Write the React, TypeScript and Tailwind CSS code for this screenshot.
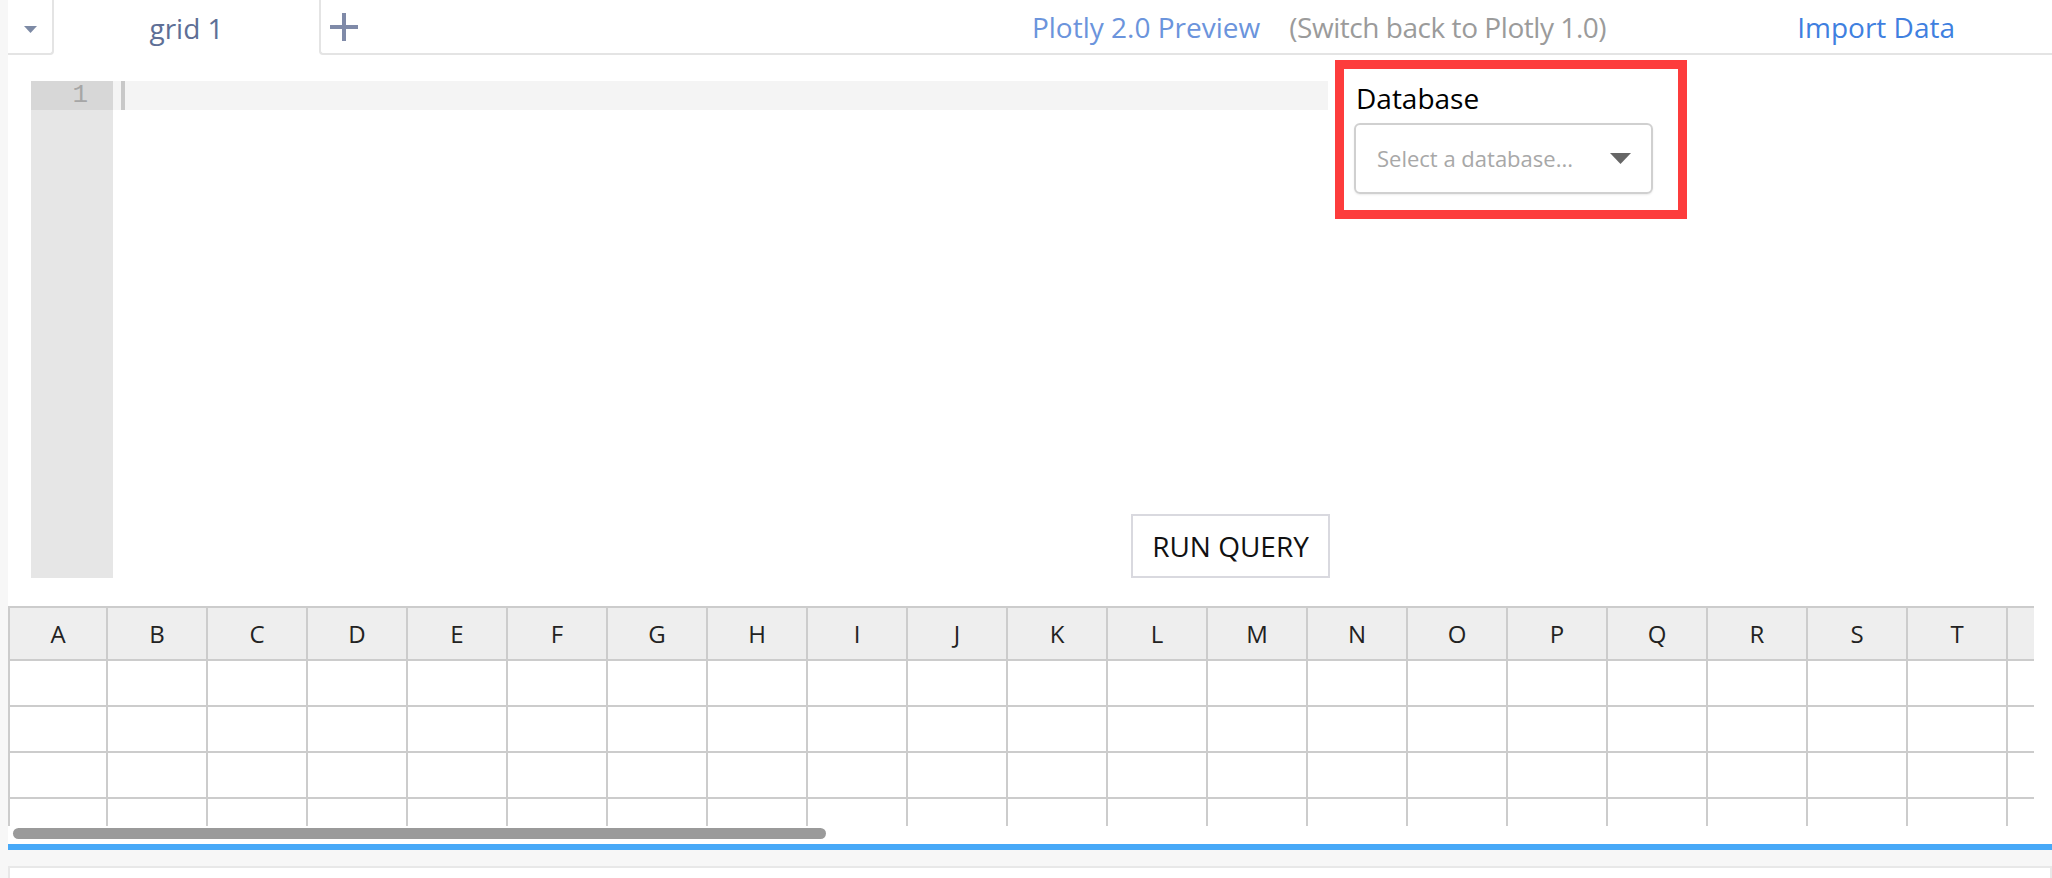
import React from "react";

const cols = ["A", "B", "C", "D", "E", "F", "G", "H", "I", "J", "K", "L", "M", "N", "O", "P", "Q", "R", "S", "T", ""];
const rows = [0, 1, 2, 3];

export default function App() {
  return (
    <div className="w-[2052px] h-[878px] overflow-hidden bg-[#f7f7f7] pl-2 font-['Open_Sans',sans-serif]">
      <div className="h-full bg-white flex flex-col">
        {/* tab bar */}
        <div className="h-[55px] flex shrink-0">
          <div className="w-[46px] border-r-2 border-b-2 border-[#e4e4e4] rounded-br-[4px] flex items-center justify-center pt-[6px]">
            <svg width="13" height="7" viewBox="0 0 13 7">
              <path d="M0 0h13L6.5 7z" fill="#7d8aa5" />
            </svg>
          </div>
          <div className="w-[265px] flex items-center justify-center text-[28px] text-[#5e6f96]">grid 1</div>
          <div className="flex-1 border-l-2 border-b-2 border-[#e4e4e4] rounded-bl-[4px] flex items-center">
            <svg className="ml-[9px]" width="28" height="28" viewBox="0 0 28 28">
              <rect x="0" y="12" width="28" height="4" fill="#7f8aa8" />
              <rect x="12" y="0" width="4" height="28" fill="#7f8aa8" />
            </svg>
            <div className="ml-auto flex items-center text-[28px]">
              <span className="text-[#6b94dc]">Plotly 2.0 Preview</span>
              <span className="ml-[29px] tracking-[-0.45px] text-[#9b9b9b]">(Switch back to Plotly 1.0)</span>
              <span className="ml-[191px] mr-[97px] text-[#3f80df]">Import Data</span>
            </div>
          </div>
        </div>

        {/* editor + database */}
        <div className="h-[523px] flex items-start shrink-0">
          <div className="relative ml-[23px] mt-[26px] w-[1299px] h-[497px] flex">
            <div className="w-[82px] h-full bg-[#e6e6e6]">
              <div className="h-[29px] bg-[#d7d7d7] text-right pr-[25px] font-['Liberation_Mono',monospace] text-[26px] leading-[29px] text-[#a6a6a6]">
                1
              </div>
            </div>
            <div className="flex-1">
              <div className="h-[29px] w-[1215px] bg-[#f4f4f4] pl-[8px]">
                <div className="w-[4px] h-full bg-[#c8c8c8]" />
              </div>
            </div>
            <button className="absolute right-0 bottom-0 w-[199px] h-[64px] border-2 border-[#d9d9df] bg-white text-[28px] text-[#111111]">
              RUN QUERY
            </button>
          </div>

          <div className="ml-[5px] mt-[5px] w-[352px] h-[159px] border-[9px] border-[#fd3c3c] pl-[10px] pt-[10px]">
            <div className="pl-[2px] text-[28px] leading-[38px] text-black">Database</div>
            <div className="mt-[6px] w-[299px] h-[71px] rounded-[6px] border-2 border-[#d0d0d0] shadow-[0_1px_2px_rgba(0,0,0,0.08)] flex items-center pl-[21px] pr-[20px]">
              <span className="text-[22px] text-[#a8a8a8]">Select a database...</span>
              <svg className="ml-auto" width="21" height="11" viewBox="0 0 21 11">
                <path d="M0 0h21L10.5 11z" fill="#666666" />
              </svg>
            </div>
          </div>
        </div>

        {/* grid */}
        <div className="mt-[28px] w-[2026px] h-[220px] shrink-0 overflow-hidden border-l-2 border-t-2 border-[#cccccc]">
          <div className="flex w-max h-[53px] bg-[#eeeeee] border-b-2 border-[#cccccc]">
            {cols.map((c, i) => (
              <div
                key={i}
                className={
                  (i === 0 ? "w-[98px]" : "w-[100px]") +
                  " shrink-0 border-r-2 border-[#cccccc] flex items-center justify-center text-[24px] text-[#222222]"
                }
              >
                {c}
              </div>
            ))}
          </div>
          {rows.map((r) => (
            <div key={r} className="flex w-max h-[46px] border-b-2 border-[#cccccc]">
              {cols.map((c, i) => (
                <div key={i} className={(i === 0 ? "w-[98px]" : "w-[100px]") + " shrink-0 border-r-2 border-[#cccccc]"} />
              ))}
            </div>
          ))}
        </div>

        {/* horizontal scrollbar */}
        <div className="h-[18px] pt-[2px] pl-[5px] shrink-0">
          <div className="w-[813px] h-[11px] rounded-full bg-[#9a9a9a]" />
        </div>

        <div className="h-[6px] bg-[#47a9f8] shrink-0" />
        <div className="h-[16px] bg-[#f7f7f7] shrink-0" />
        <div className="flex-1 bg-white border-t-2 border-l-2 border-r-2 border-[#e8e8e8]" />
      </div>
    </div>
  );
}
